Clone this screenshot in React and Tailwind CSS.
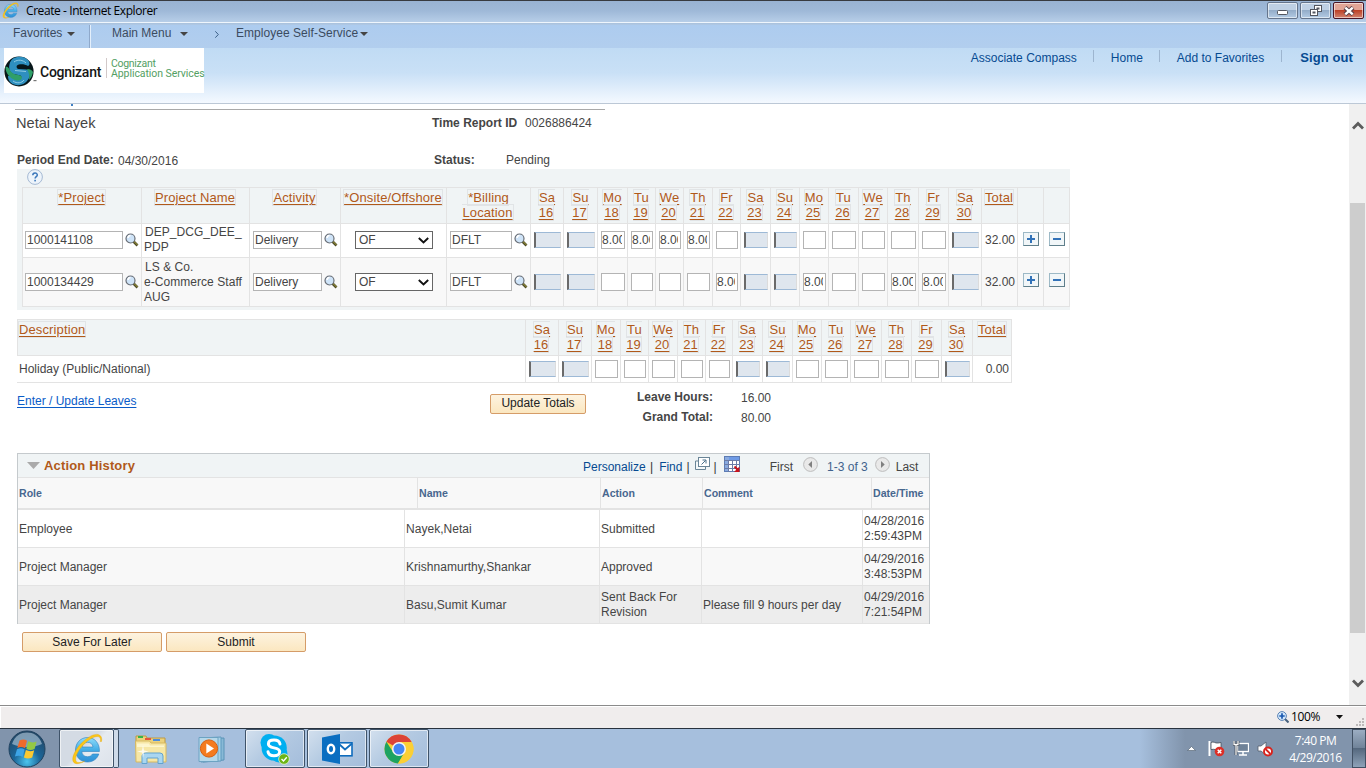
import React from "react";

const DAYS = [
  ["Sa", "16"], ["Su", "17"], ["Mo", "18"], ["Tu", "19"], ["We", "20"], ["Th", "21"], ["Fr", "22"], ["Sa", "23"],
  ["Su", "24"], ["Mo", "25"], ["Tu", "26"], ["We", "27"], ["Th", "28"], ["Fr", "29"], ["Sa", "30"],
];
const OFF = [0, 1, 7, 8, 14];

const PROJECTS = [
  { id: "1000141108", name: ["DEP_DCG_DEE_", "PDP"], hours: { 2: "8.00", 3: "8.00", 4: "8.00", 5: "8.00" }, row: "h-[33px] bg-white [&>div]:pb-px", sign: "mb-[2px]" },
  { id: "1000134429", name: ["LS & Co.", "e-Commerce Staff", "AUG"], hours: { 6: "8.00", 9: "8.00", 12: "8.00", 13: "8.00" }, row: "h-[48px] bg-[#f8f8f8]", sign: "mb-[4px]" },
];

const HISTORY = [
  { role: "Employee", name: "Nayek,Netai", action: ["Submitted"], comment: "", time: ["04/28/2016", "2:59:43PM"], bg: "bg-white" },
  { role: "Project Manager", name: "Krishnamurthy,Shankar", action: ["Approved"], comment: "", time: ["04/29/2016", "3:48:53PM"], bg: "bg-[#f8f8f8]" },
  { role: "Project Manager", name: "Basu,Sumit Kumar", action: ["Sent Back For", "Revision"], comment: "Please fill 9 hours per day", time: ["04/29/2016", "7:21:54PM"], bg: "bg-[#ededed]" },
];

const MAIN_COLS =
  "grid grid-cols-[119px_108px_91px_106px_84px_33px_34px_30px_28px_28px_29px_28px_30px_29px_29px_30px_29px_31px_30px_33px_36px_26px_27px]";
const HOLIDAY_COLS =
  "grid grid-cols-[508px_33px_33px_29px_28px_29px_28px_27px_30px_30px_29px_29px_31px_30px_30px_31px_40px]";

function IELogo({ className }) {
  return (
    <svg className={className} viewBox="0 0 32 32">
      <defs>
        <linearGradient id="ieblue" x1="0" y1="0" x2="0" y2="1">
          <stop offset="0" stopColor="#8fdcfa" />
          <stop offset="0.5" stopColor="#45aee6" />
          <stop offset="1" stopColor="#2f8fd6" />
        </linearGradient>
      </defs>
      <path
        fill="url(#ieblue)" stroke="#2b7fc0" strokeWidth="0.6" fillRule="evenodd"
        d="M16.5 4.5C9.500 4.500 4.500 10 4.500 17s5 12 12 12c5.500 0 9.800-3.200 11.300-8h-6.300c-1 1.700-2.700 2.700-5 2.700-3.300 0-5.500-2-5.700-5.200H28.400c.5-8-4.600-14-11.900-14zM11 14c.5-2.900 2.600-4.700 5.600-4.700s5 1.800 5.400 4.700z"
      />
      <path
        fill="#fbc618" stroke="#e3a409" strokeWidth="0.4"
        d="M30.500 8.500c.8-3.500-.3-6.300-3.400-7-4.200-.8-11 2.700-16.800 8.800C3.500 17.500 0 25.800 2.600 29.200c2 2.500 6.300 1.600 11-1-4 1.600-7.200 1.800-8.400.2-2-2.800.9-9.800 7-16.300 5.500-5.900 11.800-9.300 15-8.500 1.900.5 2.700 2.300 2 5z"
      />
    </svg>
  );
}

const Caret = ({ className = "" }) => (
  <svg className={"h-[4px] w-[8px] " + className} viewBox="0 0 8 4"><path d="M0 0h8L4 4z" fill="#444" /></svg>
);

function TitleBar() {
  const base = "flex h-[17px] items-center justify-center rounded-[2px] border shadow-[inset_0_0_0_1px_rgba(255,255,255,0.55)]";
  return (
    <div className="flex h-[25px] shrink-0 items-start border-t border-[#383b40] bg-[linear-gradient(#99b3d3_0px,#9fb9d8_10px,#b7cee8_21px,#eef5fc_21px,#eef5fc_22px,#a8c1dc_22px,#b0c9e6_24px)] pl-[2px] pr-[2px]">
      <IELogo className="mt-px h-[17px] w-[17px]" />
      <span className="ml-[7px] mt-px flex-1 whitespace-nowrap font-['Open_Sans','Noto_Sans',sans-serif] text-[12px] leading-[18px] tracking-[-0.42px] text-black">Create - Internet Explorer</span>
      <div className="mt-px flex gap-[2px]">
        <div className={base + " w-[31px] border-[#65758c] bg-[linear-gradient(#bed0e4_50%,#94adc9_50%,#b3cbe4)]"}>
          <svg className="mt-[3px] h-[5px] w-[11px]" viewBox="0 0 11 5"><rect x=".5" y=".5" width="10" height="4" rx="1" fill="#fff" stroke="#53565f" /></svg>
        </div>
        <div className={base + " w-[31px] border-[#65758c] bg-[linear-gradient(#bed0e4_50%,#94adc9_50%,#b3cbe4)]"}>
          <svg className="h-[12px] w-[12px]" viewBox="0 0 12 12" fill="#fff" stroke="#53565f"><rect x="4.500" y=".5" width="7" height="6" /><rect x="7" y="3" width="2" height="1" /><rect x=".5" y="4.500" width="7" height="6" /><rect x="3" y="7" width="2" height="1" fill="#8ba3bf" /></svg>
        </div>
        <div className={base + " w-[31px] border-[#4a1526] bg-[linear-gradient(#e2a596_50%,#bd4127_50%,#d28370)]"}>
          <svg className="h-[10px] w-[12px]" viewBox="0 0 12 10"><path d="M2 1.500l8 7M10 1.500l-8 7" stroke="#5a4048" strokeWidth="4.400" /><path d="M2.300 1.700l7.400 6.600M9.700 1.700l-7.400 6.600" stroke="#fff" strokeWidth="2.400" /></svg>
        </div>
      </div>
    </div>
  );
}

function NavBar() {
  return (
    <div className="flex h-[23px] shrink-0 items-center bg-[linear-gradient(#adccef,#b2ceee)] pb-[7px] text-[12px] text-[#3b4b60]">
      <span className="ml-[13px] w-[54px]">Favorites</span>
      <Caret className="mt-[2px]" />
      <span className="ml-[14px] mt-[7px] h-[23px] w-[2px] border-l border-[#8fa9cb] bg-[#e4effb]" />
      <span className="ml-[21px] w-[68px] whitespace-nowrap">Main Menu</span>
      <Caret className="mt-[2px]" />
      <svg className="ml-[27px] mt-[2px] h-[7px] w-[4px]" viewBox="0 0 4 7"><path d="M.3.3l3 3.200-3 3.200" fill="none" stroke="#3b5f86" /></svg>
      <span className="ml-[17px] w-[124px] whitespace-nowrap tracking-[0.04px]">Employee Self-Service</span>
      <Caret className="mt-[2px]" />
    </div>
  );
}

function Banner() {
  const sep = "h-[12px] w-px bg-[#9db5cf]";
  return (
    <div className="flex h-[56px] shrink-0 items-start border-b border-[#bcc8d6] bg-[linear-gradient(#c0dbf4,#c9e0f6_45%,#f4f9ff)] pl-[4px] text-[12px] text-[#064a91]">
      <div className="flex h-[45px] w-[200px] items-start bg-white">
        <svg className="mt-[8px] h-[32px] w-[33px] shrink-0" viewBox="0 0 33 32">
          <ellipse cx="15" cy="15.500" rx="14.600" ry="15" fill="#07161a" />
          <path d="M9 2.500c5-3 12-2 15 1.500 2 3 2 5 0 6-3-2-9-2.500-11-.5-1 1.500 0 3 1.500 3.500l8 .5c4 1 4 6 2 9.500-3 5-8 7-12.500 6-5-1-8-4-8-9l4-1c1 3 4 5 7 4 2.500-.7 3-2.500 1.500-3.500l-7-1.500C3.500 16 4 6.500 9 2.500z" fill="#2e8fbf" />
          <path d="M1.500 11c2-1 3.500 1 5 4 1.500 2.500 4 3.500 8 4 3 .4 4 2 3 4-1 1.500-4 2-6.500 1C5.500 22 1.500 17 1.500 11z" fill="#2f9f68" />
          <path d="M23 13c3 0 5 1 6 3-.5 3-2 6-4 8 .5-3 .5-7-2-11z" fill="#2f9f68" />
          <path d="M10 6c4-3 9-2 12 1M11 14.500l11 1M9 25c4 3 9 2 11-1" fill="none" stroke="#8ecbe4" strokeWidth="1" />
          <rect x="29.500" y="24" width="3" height="1.200" fill="#777" />
        </svg>
        <span className="ml-[3px] mt-[14px] w-[66px] shrink-0 whitespace-nowrap font-[Roboto,sans-serif] text-[14px] font-medium leading-[20px] tracking-[-0.26px] text-[#161616]">Cognizant</span>
        <span className="mt-[10px] h-[20px] w-px shrink-0 bg-[#d2c9c9]" />
        <span className="ml-[4px] mt-[11px] whitespace-nowrap font-[Roboto,sans-serif] text-[10.500px] leading-[10px] tracking-[-0.07px] text-[#53a063]"><span className="tracking-[-0.3px]">Cognizant</span><br />Application Services</span>
      </div>
      <div className="ml-auto flex h-[20px] items-center whitespace-nowrap pr-[13px]">
        <span>Associate Compass</span>
        <span className={sep + " ml-[16px] mb-[4px]"} />
        <span className="ml-[17px]">Home</span>
        <span className={sep + " ml-[16px] mb-[4px]"} />
        <span className="ml-[17px]">Add to Favorites</span>
        <span className={sep + " ml-[17px] mb-[4px]"} />
        <b className="ml-[18px] text-[13px] tracking-[0.1px]">Sign out</b>
      </div>
    </div>
  );
}

const HeadLink = ({ children }) => (
  <span className="border border-[#e1e4e6] underline decoration-1 underline-offset-[2px]">{children}</span>
);

function Head({ lines, left }) {
  return (
    <div className={"border-l border-[#e3e3e3] pt-[2px] text-[13px] leading-[15px] tracking-[0.12px] text-[#b0591a] " + (left ? "text-left" : "pr-px text-center")}>
      {lines.length > 0 && (
        <HeadLink>{lines.map((l, i) => <React.Fragment key={i}>{i > 0 && <br />}{l}</React.Fragment>)}</HeadLink>
      )}
    </div>
  );
}

function Magnifier() {
  return (
    <svg className="h-[14px] w-[14px] shrink-0" viewBox="0 0 14 14">
      <path d="M8.500 8.500l4 4" stroke="#4d4a26" strokeWidth="2.600" />
      <path d="M8.500 8l4 4" stroke="#a8a23c" strokeWidth="1" />
      <circle cx="5.500" cy="5.500" r="4.500" fill="#cfe4f8" stroke="#686d75" strokeWidth="1.200" />
      <path d="M3 5a2.600 2.600 0 012.500-2.500" stroke="#fff" strokeWidth="1.400" fill="none" />
    </svg>
  );
}

const Cell = ({ children, className = "" }) => (
  <div className={"flex min-w-0 items-center border-l border-[#e3e3e3] " + className}>{children}</div>
);

function Hour({ off, value }) {
  return (
    <Cell className="pl-[3px] pr-[2px]">
      {off ? (
        <div className="h-[16px] w-full border-y border-l-[2px] border-r border-y-[#9db9d6] border-l-[#6a6a6a] border-r-[#dcdcdc] bg-[#dfe6ee]" />
      ) : (
        <div className="flex h-[18px] w-full items-center overflow-hidden border border-[#b4b4b4] bg-white pr-[2px]">
          <span className="w-full overflow-hidden whitespace-nowrap text-[12px]">{value}</span>
        </div>
      )}
    </Cell>
  );
}

const Field = ({ w, children }) => (
  <div className={"flex h-[18px] shrink-0 items-center border border-[#b4b4b4] bg-white pl-px " + w}>{children}</div>
);

function SignButton({ plus, className }) {
  return (
    <svg className={"h-[14px] w-[16px] " + className} viewBox="0 0 16 14">
      <rect width="16" height="14" fill="#5f7f8b" />
      <path d="M0 0h16l-1 1H1v12l-1 1z" fill="#9db9c6" />
      <rect x="1" y="1" width="14" height="12" fill="#f1f6f8" />
      <path d={plus ? "M4 7h8M8 3v8" : "M4 7h8"} stroke="#3272b8" strokeWidth="2" />
    </svg>
  );
}

function ProjectTable() {
  return (
    <div className="ml-[17px] h-[141px] w-[1053px] bg-[#f0f4f5] pl-[5px]">
      <div className="flex h-[18px] items-start pl-[5px]">
        <svg className="h-[16px] w-[16px]" viewBox="0 0 16 16">
          <circle cx="8" cy="8" r="7.400" fill="#edf4fb" stroke="#a5b9d3" />
          <path d="M5.800 6.300c0-3 4.500-3 4.500-.3 0 1.700-2.200 1.700-2.200 3.500" fill="none" stroke="#3c78bb" strokeWidth="1.500" />
          <rect x="7.300" y="10.800" width="1.600" height="1.600" fill="#3c78bb" />
        </svg>
      </div>
      <div className={MAIN_COLS + " h-[37px] w-[1048px] border-y border-[#e3e3e3]"}>
        <Head lines={["*Project"]} />
        <Head lines={["Project Name"]} />
        <Head lines={["Activity"]} />
        <Head lines={["*Onsite/Offshore"]} />
        <Head lines={["*Billing", "Location"]} />
        {DAYS.map((d, i) => <Head key={i} lines={d} />)}
        <Head lines={["Total"]} />
        <Head lines={[]} />
        <div className="border-x border-[#e3e3e3]" />
      </div>
      {PROJECTS.map((p) => (
        <div key={p.id} className={MAIN_COLS + " box-content w-[1048px] border-b border-[#e3e3e3] " + p.row}>
          <Cell className="pl-[2px]"><Field w="w-[98px]">{p.id}</Field><span className="ml-[2px]"><Magnifier /></span></Cell>
          <Cell className="pl-[2px] leading-[15px]"><div className="whitespace-nowrap tracking-[0.05px] first-line:indent-px">{p.name.map((n, i) => <div key={n} className={i === 0 ? "pl-px" : ""}>{n}</div>)}</div></Cell>
          <Cell className="pl-[3px]"><Field w="w-[69px]">Delivery</Field><span className="ml-[2px]"><Magnifier /></span></Cell>
          <Cell className="pl-[14px]">
            <div className="flex h-[18px] w-[78px] items-center justify-between border border-[#666] bg-white pl-[3px] pr-[3px]">
              OF
              <svg className="h-[7px] w-[11px]" viewBox="0 0 11 7"><path d="M.8 1l4.700 4.500L10.200 1" fill="none" stroke="#111" strokeWidth="1.900" /></svg>
            </div>
          </Cell>
          <Cell className="pl-[3px]"><Field w="w-[62px]">DFLT</Field><span className="ml-[2px]"><Magnifier /></span></Cell>
          {DAYS.map((d, i) => <Hour key={i} off={OFF.includes(i)} value={p.hours[i] || ""} />)}
          <Cell className="justify-end pr-[2px]">32.00</Cell>
          <Cell className="pl-[5px]"><SignButton plus className={p.sign} /></Cell>
          <Cell className="border-r pl-[5px]"><SignButton className={p.sign} /></Cell>
        </div>
      ))}
    </div>
  );
}

function HolidayTable() {
  return (
    <div className="ml-[17px] mt-[9px] w-[995px]">
      <div className={HOLIDAY_COLS + " h-[37px] border-y border-r border-[#e3e3e3] bg-[#f0f4f5]"}>
        <Head lines={["Description"]} left />
        {DAYS.map((d, i) => <Head key={i} lines={d} />)}
        <Head lines={["Total"]} />
      </div>
      <div className={HOLIDAY_COLS + " h-[27px] border-b border-r border-[#e3e3e3]"}>
        <Cell className="border-l-white pl-px">Holiday (Public/National)</Cell>
        {DAYS.map((d, i) => <Hour key={i} off={OFF.includes(i)} value="" />)}
        <Cell className="justify-end pr-[3px]">0.00</Cell>
      </div>
    </div>
  );
}

const Button = ({ children, w }) => (
  <div className={"flex h-[20px] items-center justify-center rounded-[2px] border border-[#d59c68] bg-[linear-gradient(#fdf3e0,#fbe7c0)] text-[12px] text-[#222] " + w}>{children}</div>
);

function Pager({ back }) {
  return (
    <svg className="mb-[6px] h-[15px] w-[15px]" viewBox="0 0 15 15">
      <circle cx="7.500" cy="7.500" r="6.900" fill="#e9e9e9" stroke="#bdbdbd" />
      <path d={back ? "M9 4v7L5.300 7.500z" : "M6 4v7l3.700-3.500z"} fill="#808080" />
    </svg>
  );
}

function ActionHistory() {
  const line = "border-l border-[#e3e3e3]";
  return (
    <div className="ml-[17px] mt-[33px] w-[913px] border border-b-0 border-[#c5cacd]">
      <div className="flex h-[24px] items-center whitespace-nowrap border-b border-[#e3e3e3] bg-[#f0f4f5] text-[12px] text-[#064a91]">
        <svg className="ml-[9px] h-[7px] w-[13px]" viewBox="0 0 13 7"><path d="M0 0h13L6.500 7z" fill="#aaa" /></svg>
        <b className="ml-[4px] w-[539px] text-[13px] tracking-[0.16px] text-[#b0591a]">Action History</b>
        <div className="mt-[3px] flex items-center">
          <span className="w-[62px]">Personalize</span>
          <span className="ml-[5px] text-[#333]">|</span>
          <span className="ml-[6px]">Find</span>
          <span className="ml-[4px] text-[#333]">|</span>
          <svg className="mb-[7px] ml-[5px] h-[13px] w-[15px]" viewBox="0 0 15 13"><path d="M3.500 4H.5v8.500h10V10" fill="#f4f8f9" stroke="#6a8597" /><rect x="3.500" y=".5" width="11" height="9" fill="#fff" stroke="#6a8597" /><path d="M6.500 7.500l4-4M7.500 3h3.500v3.500" fill="none" stroke="#4b708a" /></svg>
          <span className="ml-[4px] text-[#333]">|</span>
          <svg className="mb-[7px] ml-[7px] h-[16px] w-[16px]" viewBox="0 0 16 16"><rect x=".5" y=".5" width="15" height="15" fill="#fff" stroke="#5d7cb4" /><rect x="1" y="1" width="14" height="3.500" fill="#6f9be6" /><rect x="1" y="1" width="4" height="14" fill="#89aae0" /><path d="M0 4.500h16M0 8.500h16M0 12.500h16M4.500 4v12M8.500 4v12M12.500 4v12" stroke="#6b7aa5" /><path d="M10.500 10.500l4 4" stroke="#c8141c" strokeWidth="2" /><path d="M15.500 10.500v5.500H10z" fill="#c8141c" /></svg>
          <span className="ml-[30px] text-[#444]">First</span>
          <span className="ml-[10px]"><Pager back /></span>
          <span className="ml-[9px] text-[#3f628c]">1-3 of 3</span>
          <span className="ml-[7px]"><Pager /></span>
          <span className="ml-[6px] text-[#444]">Last</span>
        </div>
      </div>
      <div className="grid h-[32px] grid-cols-[399px_183px_102px_169px_58px] border-b-2 border-[#e3e3e3] bg-[#f8f8f8] text-[10.600px] font-bold leading-[30px] text-[#48678f]">
        <span className="pl-px">Role</span>
        <span className={line + " pl-px"}>Name</span>
        <span className={line + " pl-px"}>Action</span>
        <span className={line + " pl-px"}>Comment</span>
        <span className={line + " pl-px"}>Date/Time</span>
      </div>
      {HISTORY.map((h, i) => (
        <div key={i} className={"grid h-[38px] grid-cols-[386px_195px_102px_161px_67px] items-stretch border-b border-[#e3e3e3] leading-[15px] " + h.bg}>
          <div className="flex items-center pl-px pt-[2px]">{h.role}</div>
          <div className={line + " flex items-center pl-px pt-[2px] tracking-[0.03px]"}>{h.name}</div>
          <div className={line + " flex items-center pl-px " + (h.action.length === 1 ? "pt-[2px]" : "")}><div>{h.action.map((a) => <div key={a}>{a}</div>)}</div></div>
          <div className={line + " flex items-center whitespace-nowrap pl-px pt-[2px]"}>{h.comment}</div>
          <div className={line + " flex items-center pl-px"}><div>{h.time.map((t) => <div key={t}>{t}</div>)}</div></div>
        </div>
      ))}
    </div>
  );
}

function Content() {
  return (
    <div className="h-[601px] w-[1349px] overflow-hidden text-[12px] text-[#454545]">
      <div className="ml-[15px] h-[6px] w-[590px] border-b border-[#a9a9a9] pl-[56px]">
        <div className="h-[2px] w-[2px] bg-[#3f7fc4]" />
      </div>
      <div className="flex h-[27px] items-center pb-[2px] pl-[16px]">
        <span className="w-[416px] text-[14.600px] leading-[18px]">Netai Nayek</span>
        <b className="w-[93px]">Time Report ID</b>
        <span>0026886424</span>
      </div>
      <div className="flex h-[32px] items-center pl-[17px] pt-[14px]">
        <b className="w-[101px] whitespace-nowrap">Period End Date:</b>
        <span className="w-[316px] pt-px">04/30/2016</span>
        <b className="w-[72px]">Status:</b>
        <span>Pending</span>
      </div>
      <ProjectTable />
      <HolidayTable />
      <div className="flex h-[37px] items-start pl-[17px]">
        <span className="mt-[9px] w-[473px] text-[#0a5cc8] underline underline-offset-[2px]">Enter / Update Leaves</span>
        <div className="mt-[11px]"><Button w="w-[96px] pb-[2px]">Update Totals</Button></div>
        <div className="ml-[30px] mt-[4px] w-[97px] text-right text-[12px] font-bold leading-[20px]">
          <div>Leave Hours:</div>
          <div>Grand Total:</div>
        </div>
        <div className="ml-[28px] mt-[5px] leading-[20px]"><div>16.00</div><div>80.00</div></div>
      </div>
      <ActionHistory />
      <div className="mt-[8px] flex gap-[4px] pl-[22px]">
        <Button w="w-[140px]">Save For Later</Button>
        <Button w="w-[140px]">Submit</Button>
      </div>
    </div>
  );
}

function Scrollbar() {
  return (
    <div className="flex h-[601px] w-[17px] flex-col items-center bg-[#f0f0f0]">
      <svg className="mt-[17px] h-[9px] w-[12px]" viewBox="0 0 12 9"><path d="M1 7.500l5-5 5 5" fill="none" stroke="#5c5c5c" strokeWidth="2.800" /></svg>
      <div className="mt-[73px] h-[430px] w-[15px] bg-[#cdcdcd]" />
      <svg className="mt-[46px] h-[9px] w-[12px]" viewBox="0 0 12 9"><path d="M1 1.500l5 5 5-5" fill="none" stroke="#5c5c5c" strokeWidth="2.800" /></svg>
    </div>
  );
}

function StatusBar() {
  return (
    <div className="flex h-[23px] shrink-0 items-center border-t border-[#8b8b8b] bg-[#f0eded] font-['Open_Sans','Noto_Sans',sans-serif] text-[12px] text-black shadow-[inset_1px_1px_0_#fff]">
      <svg className="ml-auto h-[12px] w-[12px]" viewBox="0 0 12 12"><path d="M7.500 7.500l4 4" stroke="#49627f" strokeWidth="2" /><circle cx="5" cy="5" r="4.400" fill="#d2e6fa" stroke="#5b83b4" /><path d="M2.300 5h5.400M5 2.300v5.400" stroke="#1a59b0" strokeWidth="1.700" /></svg>
      <span className="ml-[2px] w-[30px] whitespace-nowrap tracking-[-0.35px]">100%</span>
      <svg className="ml-[15px] h-[4px] w-[7px]" viewBox="0 0 7 4"><path d="M0 0h7L3.500 4z" fill="#111" /></svg>
      <svg className="ml-[12px] mt-[10px] h-[10px] w-[11px]" viewBox="0 0 11 10"><path d="M7 1h2v2H7zM4 4h2v2H4zM7 4h2v2H7zM1 7h2v2H1zM4 7h2v2H4zM7 7h2v2H7z" fill="#bdb9b9" /></svg>
    </div>
  );
}

function StartOrb() {
  return (
    <svg className="h-[38px] w-[38px]" viewBox="0 0 38 38">
      <defs>
        <radialGradient id="orb" cx=".5" cy=".85" r=".8">
          <stop offset="0" stopColor="#4cc5ee" /><stop offset=".45" stopColor="#1b6699" /><stop offset="1" stopColor="#234867" />
        </radialGradient>
      </defs>
      <circle cx="19" cy="19" r="18" fill="url(#orb)" stroke="#20425f" />
      <path d="M4 14C7 5 13 2.500 19 2.500S31 5 34 14c-8 4-22 4-30 0z" fill="#b9cfdf" opacity=".6" />
      <path d="M11.500 10.500c3-1.500 5.500-1.300 7.500.2l-2 7.500c-2.400-1.500-5-1.600-7.700-.3z" fill="#ee6a2c" />
      <path d="M20.300 11.300c3 1.500 5.700 1.300 8.300.2l-2 7.500c-3 1.300-5.700 1.200-8.300-.3z" fill="#93c844" />
      <path d="M9 19.200c3-1.400 5.400-1.200 7.600.2l-2 7.500c-2.400-1.400-5-1.500-7.700-.3z" fill="#3da4e6" />
      <path d="M17.900 20c2.800 1.500 5.500 1.500 8.300.2l-2 7.400c-3 1.300-5.700 1.300-8.300-.2z" fill="#fbc931" />
    </svg>
  );
}

function FolderIcon() {
  return (
    <svg className="h-[30px] w-[34px]" viewBox="0 0 34 30">
      <path d="M2 1h10l1 2h18v6H2z" fill="#ecd27c" stroke="#bd9a44" />
      <path d="M4 1h5v2H4z" fill="#36b44a" /><path d="M11 3h6v2h-6z" fill="#e5543d" /><path d="M19 4h7v2h-7z" fill="#4d8ddd" />
      <path d="M1.500 6h14l1.500 2h15v19h-30z" fill="#f6e7a6" stroke="#d7b961" />
      <path d="M3 8.500h12l1 2h14v1.500H3z" fill="#fdf6ce" />
      <path d="M8 28.500V21q0-3 3-3h15q3 0 3 3v7.500h-5V23H13v5.500z" fill="#a9d6f0" stroke="#62a3cf" />
      <path d="M9 10l1 5.500 5 1-5 1-1 5.500-1-5.500-5-1 5-1z" fill="#fff" opacity=".8" />
    </svg>
  );
}

function MediaIcon() {
  return (
    <svg className="h-[27px] w-[29px]" viewBox="0 0 29 27">
      <path d="M5 3l21-1v22l-21 2z" fill="#88b9d6" stroke="#5a94b8" />
      <path d="M3 2l20-1v24l-20 1z" fill="#a6d0e7" stroke="#5f9abd" />
      <path d="M1 1.500h19v24H1z" fill="#b5d8ea" stroke="#6ca3c2" />
      <circle cx="11" cy="12.500" r="8.600" fill="#f47b1f" stroke="#d75f10" />
      <path d="M8.300 7.500v10l7.700-5z" fill="#fff" />
    </svg>
  );
}

function SkypeIcon() {
  return (
    <svg className="h-[32px] w-[32px]" viewBox="0 0 32 32">
      <circle cx="10" cy="9.500" r="8.500" fill="#00aff0" /><circle cx="20" cy="21" r="8.500" fill="#00aff0" /><circle cx="15.200" cy="15" r="12.600" fill="#00aff0" />
      <path d="M21 11c-.5-2.600-2.800-3.900-6-3.900-3.600 0-5.600 1.700-5.600 3.900 0 5.500 11.300 2.300 11.300 7.800 0 2.300-2.200 4-5.700 4-3.300 0-5.600-1.400-6-4" fill="none" stroke="#fff" strokeWidth="3" strokeLinecap="round" />
      <circle cx="25" cy="26" r="5.300" fill="#6cb518" stroke="#e3f3d2" strokeWidth=".8" />
      <path d="M22.500 26l2 2 3.300-3.700" fill="none" stroke="#fff" strokeWidth="1.400" />
    </svg>
  );
}

function OutlookIcon() {
  return (
    <svg className="h-[30px] w-[31px]" viewBox="0 0 31 30">
      <rect x="16" y="8.800" width="14" height="13" fill="#fff" stroke="#0f6cbd" strokeWidth="1.600" />
      <path d="M17 10l6 5.500L30 9.500" fill="none" stroke="#0f6cbd" strokeWidth="1.800" />
      <path d="M0 3.500L18 0v30L0 26.500z" fill="#0a6ec1" />
      <ellipse cx="9" cy="15" rx="3.200" ry="4.200" fill="none" stroke="#fff" strokeWidth="2.400" />
    </svg>
  );
}

function ChromeIcon() {
  return (
    <svg className="h-[30px] w-[30px]" viewBox="0 0 30 30">
      <circle cx="15" cy="15" r="14.500" fill="#fbcf35" />
      <path d="M15 15L2.400 7.800A14.500 14.500 0 0127.600 7.900H15z" fill="#dc4437" />
      <path d="M2.400 7.800A14.500 14.500 0 0014 29.500l6.500-11.200L15 15l-5.800 3.200z" fill="#1da362" />
      <path d="M15 7.900h12.600A14.500 14.500 0 0114 29.500l7-11z" fill="#fbcf35" />
      <circle cx="15" cy="15" r="7" fill="#f4f4f4" /><circle cx="15" cy="15" r="5.500" fill="#4486f4" />
    </svg>
  );
}

const TaskButton = ({ children, className }) => (
  <div className={"flex h-[39px] items-center justify-center rounded-[2px] border border-[#3f5369] shadow-[inset_0_0_0_1px_rgba(255,255,255,0.6)] " + className}>{children}</div>
);

function Taskbar() {
  const open = "bg-[linear-gradient(135deg,#d3e0ee,#b4cae2_45%,#a4bddb)]";
  return (
    <div className="flex h-[40px] shrink-0 items-start border-t border-[#28323e] bg-[linear-gradient(90deg,#8194ac_0px,#8194ac_58px,#a6bfdd_120px,#a6bfdd_1140px,#8194ac_1185px)]">
      <div className="ml-[8px] mt-px w-[51px]"><StartOrb /></div>
      <TaskButton className="w-[55px] bg-[linear-gradient(135deg,#d4dbe4_45%,#e6ebf1_55%,#dce2ea)]"><IELogo className="h-[32px] w-[32px]" /></TaskButton>
      <div className="h-[39px] w-[5px] rounded-r-[2px] border-y border-r border-[#3f5369] bg-[#cfdbe9]" />
      <div className="ml-[15px] mt-[6px] w-[64px]"><FolderIcon /></div>
      <div className="mt-[7px] w-[47px]"><MediaIcon /></div>
      <TaskButton className={"w-[60px] " + open}><SkypeIcon /></TaskButton>
      <TaskButton className={"ml-[2px] w-[60px] " + open}><OutlookIcon /></TaskButton>
      <TaskButton className={"ml-[2px] w-[60px] " + open}><ChromeIcon /></TaskButton>
      <div className="ml-auto flex h-[39px] items-center text-white">
        <svg className="mr-[12px] h-[5px] w-[9px]" viewBox="0 0 9 5"><path d="M.5 4.500h8l-4-4z" fill="#fff" stroke="#4c5a6c" strokeWidth=".6" /></svg>
        <svg className="mr-[8px] h-[17px] w-[17px]" viewBox="0 0 17 17"><path d="M1.500 1v15" stroke="#fff" strokeWidth="2" /><path d="M3 2.500c3-1.500 4 1 7 .5l3-.5v7c-4 1.500-6-1-10 0z" fill="#fff" stroke="#444d58" strokeWidth=".8" /><circle cx="11.500" cy="11.500" r="4.800" fill="#dd2f27" /><path d="M9.700 9.700l3.600 3.600M13.300 9.700l-3.600 3.600" stroke="#fff" strokeWidth="1.500" /></svg>
        <svg className="mr-[8px] h-[16px] w-[16px]" viewBox="0 0 16 16"><rect x="4.500" y="2.500" width="11" height="8" fill="#6f8298" stroke="#fff" strokeWidth="1.300" /><path d="M10 11v2.500M6 14h8" stroke="#fff" strokeWidth="1.500" /><path d="M1 0v3.500h4V0M3 3v11" fill="none" stroke="#2f3742" strokeWidth="2.600" /><path d="M1 0v3.500h4V0M3 3v11" fill="none" stroke="#fff" strokeWidth="1.300" /></svg>
        <svg className="h-[16px] w-[16px]" viewBox="0 0 16 16"><path d="M1 5h3l5-4v13l-5-4H1z" fill="#fff" stroke="#535e6c" strokeWidth=".8" /><circle cx="11" cy="10.500" r="4" fill="#fff" stroke="#d8231d" strokeWidth="1.900" /><path d="M8.500 8l5 5" stroke="#d8231d" strokeWidth="1.800" /></svg>
        <div className="ml-[12px] w-[61px] whitespace-nowrap text-center font-['Open_Sans','Noto_Sans',sans-serif] text-[12px] leading-[17px] tracking-[-0.5px]">7:40 PM<br />4/29/2016</div>
        <div className="ml-[6px] h-[39px] w-[14px] border border-[#415063] bg-[linear-gradient(#9cadc2,#6f8298_50%,#55687e_50%,#8ea2b8)]" />
      </div>
    </div>
  );
}

export default function App() {
  return (
    <div className="flex h-[768px] w-[1366px] flex-col overflow-hidden bg-white font-['Liberation_Sans',Arial,sans-serif]">
      <TitleBar />
      <NavBar />
      <Banner />
      <div className="flex h-[601px] shrink-0"><Content /><Scrollbar /></div>
      <StatusBar />
      <Taskbar />
    </div>
  );
}
